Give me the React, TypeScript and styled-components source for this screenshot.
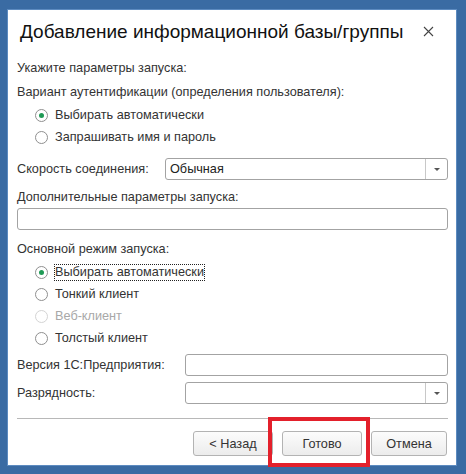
import styled, { createGlobalStyle } from 'styled-components'

const GlobalStyle = createGlobalStyle`
  html, body {
    margin: 0;
    padding: 0;
    background-color: #3a6ba3;
  }
  body {
    font-family: 'Liberation Sans', Arial, sans-serif;
  }
`

const Desktop = styled.div`
  width: 466px;
  height: 474px;
  padding: 10px 0 0 8px;
  box-sizing: border-box;
`

const Dialog = styled.div`
  position: relative;
  width: 448px;
  height: 455px;
  background-color: #fff;
  box-shadow: 0 0 0 1px #5d8bc0;
  box-sizing: border-box;
  padding: 0 8px 0 9px;
  display: flex;
  flex-direction: column;
  color: #333;
  font-size: 12.7px;
`

const TitleBar = styled.div`
  display: flex;
  align-items: center;
  justify-content: space-between;
  height: 42px;
  padding: 0 0 0 3px;
`

const Title = styled.div`
  font-size: 19px;
  color: #111;
  margin-top: 1px;
`

const CloseButton = styled.div`
  width: 22px;
  height: 22px;
  display: flex;
  align-items: center;
  justify-content: center;
  margin-right: 9px;
  margin-top: 1px;
`

const Label = styled.div<{ $top?: number }>`
  height: 15px;
  line-height: 15px;
  margin-top: ${(p) => p.$top ?? 0}px;
  white-space: nowrap;
`

const RadioGroup = styled.div<{ $top?: number }>`
  display: flex;
  flex-direction: column;
  gap: 7px;
  padding-left: 18px;
  margin-top: ${(p) => p.$top ?? 0}px;
`

const RadioRow = styled.div<{ $disabled?: boolean }>`
  display: flex;
  align-items: center;
  height: 15px;
  color: ${(p) => (p.$disabled ? '#a8a8a8' : '#333')};
`

const RadioCircle = styled.span<{ $checked?: boolean; $disabled?: boolean }>`
  width: 13px;
  height: 13px;
  box-sizing: border-box;
  border-radius: 50%;
  border: 1px solid ${(p) => (p.$disabled ? '#d4d4d4' : '#8f8f8f')};
  background: #fff;
  margin-right: 7px;
  display: flex;
  align-items: center;
  justify-content: center;
  &::after {
    content: '';
    width: 5px;
    height: 5px;
    border-radius: 50%;
    background: #1f9a55;
    display: ${(p) => (p.$checked ? 'block' : 'none')};
  }
`

const RadioText = styled.span<{ $focused?: boolean }>`
  outline: ${(p) => (p.$focused ? '1px dotted #222' : 'none')};
  outline-offset: 0;
  line-height: 15px;
`

const FieldRow = styled.div<{ $top?: number; $labelWidth: number }>`
  display: grid;
  grid-template-columns: ${(p) => p.$labelWidth}px 1fr;
  align-items: center;
  margin-top: ${(p) => p.$top ?? 0}px;
`

const Box = styled.div<{ $top?: number }>`
  height: 22px;
  box-sizing: border-box;
  border: 1px solid #a3a3a3;
  border-radius: 3px;
  background: #fff;
  display: flex;
  align-items: stretch;
  margin-top: ${(p) => p.$top ?? 0}px;
`

const BoxValue = styled.div`
  flex: 1;
  padding-left: 4px;
  line-height: 20px;
  color: #222;
`

const DropButton = styled.div`
  width: 21px;
  border-left: 1px solid #c8c8c8;
  display: flex;
  align-items: center;
  justify-content: center;
  &::after {
    content: '';
    border-left: 3px solid transparent;
    border-right: 3px solid transparent;
    border-top: 3px solid #555;
  }
`

const Separator = styled.div`
  height: 1px;
  background: #b8b8b8;
  margin-top: 14px;
`

const ButtonBar = styled.div`
  display: flex;
  justify-content: flex-end;
  gap: 9px;
  margin-top: 12px;
  padding-right: 1px;
`

const Button = styled.div<{ $width: number }>`
  width: ${(p) => p.$width}px;
  height: 25px;
  box-sizing: border-box;
  border: 1px solid #b3b3b3;
  border-radius: 3px;
  background: linear-gradient(#fcfcfc, #ececec);
  display: flex;
  align-items: center;
  justify-content: center;
  color: #333;
`

const Highlight = styled.div`
  position: absolute;
  left: 260px;
  top: 407px;
  width: 102px;
  height: 50px;
  box-sizing: border-box;
  border: 4px solid #e3202b;
`

const App = () => {
  return (
    <>
      <GlobalStyle />
      <Desktop>
        <Dialog>
          <TitleBar>
            <Title>Добавление информационной базы/группы</Title>
            <CloseButton>
              <svg width="11" height="11" viewBox="0 0 11 11">
                <path d="M1 1 L10 10 M10 1 L1 10" stroke="#444" strokeWidth="1.1" />
              </svg>
            </CloseButton>
          </TitleBar>

          <Label $top={9}>Укажите параметры запуска:</Label>
          <Label $top={9}>Вариант аутентификации (определения пользователя):</Label>
          <RadioGroup $top={8}>
            <RadioRow>
              <RadioCircle $checked />
              <RadioText>Выбирать автоматически</RadioText>
            </RadioRow>
            <RadioRow>
              <RadioCircle />
              <RadioText>Запрашивать имя и пароль</RadioText>
            </RadioRow>
          </RadioGroup>

          <FieldRow $top={13} $labelWidth={148}>
            <Label>Скорость соединения:</Label>
            <Box>
              <BoxValue>Обычная</BoxValue>
              <DropButton />
            </Box>
          </FieldRow>

          <Label $top={10}>Дополнительные параметры запуска:</Label>
          <Box $top={3} />

          <Label $top={12}>Основной режим запуска:</Label>
          <RadioGroup $top={8}>
            <RadioRow>
              <RadioCircle $checked />
              <RadioText $focused>Выбирать автоматически</RadioText>
            </RadioRow>
            <RadioRow>
              <RadioCircle />
              <RadioText>Тонкий клиент</RadioText>
            </RadioRow>
            <RadioRow $disabled>
              <RadioCircle $disabled />
              <RadioText>Веб-клиент</RadioText>
            </RadioRow>
            <RadioRow>
              <RadioCircle />
              <RadioText>Толстый клиент</RadioText>
            </RadioRow>
          </RadioGroup>

          <FieldRow $top={8} $labelWidth={168}>
            <Label>Версия 1С:Предприятия:</Label>
            <Box />
          </FieldRow>
          <FieldRow $top={6} $labelWidth={168}>
            <Label>Разрядность:</Label>
            <Box>
              <BoxValue />
              <DropButton />
            </Box>
          </FieldRow>

          <Separator />

          <ButtonBar>
            <Button $width={80}>&lt; Назад</Button>
            <Button $width={80}>Готово</Button>
            <Button $width={76}>Отмена</Button>
          </ButtonBar>

          <Highlight />
        </Dialog>
      </Desktop>
    </>
  )
}

export default App
